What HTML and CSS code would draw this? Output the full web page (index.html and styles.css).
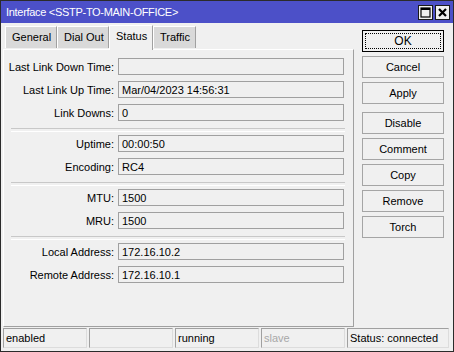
FILE: index.html
```html
<!DOCTYPE html>
<html lang="en">
<head>
    <meta charset="UTF-8">
    <title>Interface &lt;SSTP-TO-MAIN-OFFICE&gt;</title>
    <link rel="stylesheet" href="styles.css">
</head>
<body>

<div class="window">
    <div class="titlebar">
        <span class="title">Interface &lt;SSTP-TO-MAIN-OFFICE&gt;</span>
        <span class="tb-btn">
            <svg width="11" height="11" viewBox="0 0 11 11"><rect x="1" y="1" width="9" height="9" fill="none" stroke="#000" stroke-width="1.2"/><rect x="1" y="1" width="9" height="2" fill="#000"/></svg>
        </span>
        <span class="tb-btn">
            <svg width="11" height="11" viewBox="0 0 11 11"><path d="M2 2 L9 9 M9 2 L2 9" stroke="#000" stroke-width="2.2"/></svg>
        </span>
    </div>

    <div class="main">
        <div class="left">
            <div class="tabs">
                <div class="tab">General</div>
                <div class="tab">Dial Out</div>
                <div class="tab active">Status</div>
                <div class="tab">Traffic</div>
            </div>
            <div class="panel">
                <div class="row"><label>Last Link Down Time:</label><div class="field"></div></div>
                <div class="row"><label>Last Link Up Time:</label><div class="field">Mar/04/2023 14:56:31</div></div>
                <div class="row"><label>Link Downs:</label><div class="field">0</div></div>
                <div class="sep"></div>
                <div class="row"><label>Uptime:</label><div class="field">00:00:50</div></div>
                <div class="row"><label>Encoding:</label><div class="field">RC4</div></div>
                <div class="sep"></div>
                <div class="row"><label>MTU:</label><div class="field">1500</div></div>
                <div class="row"><label>MRU:</label><div class="field">1500</div></div>
                <div class="sep"></div>
                <div class="row"><label>Local Address:</label><div class="field">172.16.10.2</div></div>
                <div class="row"><label>Remote Address:</label><div class="field">172.16.10.1</div></div>
            </div>
        </div>

        <div class="buttons">
            <button class="btn default"><span>OK</span></button>
            <button class="btn">Cancel</button>
            <button class="btn">Apply</button>
            <button class="btn gap">Disable</button>
            <button class="btn">Comment</button>
            <button class="btn">Copy</button>
            <button class="btn">Remove</button>
            <button class="btn">Torch</button>
        </div>
    </div>

    <div class="statusbar">
        <div class="cell">enabled</div>
        <div class="cell"></div>
        <div class="cell">running</div>
        <div class="cell muted">slave</div>
        <div class="cell wide">Status: connected</div>
    </div>
</div>

</body>
</html>
```

FILE: styles.css
```css
* {
    box-sizing: border-box;
}

body {
    margin: 0;
    font-family: 'Liberation Sans', Arial, sans-serif;
    font-size: 11px;
    color: #000;
    background: #fff;
}

.window {
    width: 454px;
    height: 352px;
    border: 1px solid #2b2b2b;
    background-color: #f0f0f0;
    display: flex;
    flex-direction: column;
}

.titlebar {
    height: 22px;
    background-color: #4c50c8;
    color: #fff;
    display: flex;
    align-items: center;
    padding: 0 3px 0 5px;
    gap: 2px;
    font-size: 11px;
}

.title {
    flex: 1;
    letter-spacing: -0.3px;
}

.tb-btn {
    width: 15px;
    height: 15px;
    background-color: #f0f0f0;
    border: 1px solid #1a1a1a;
    display: flex;
    align-items: center;
    justify-content: center;
}

.main {
    display: flex;
    padding-top: 2px;
    flex: 1;
}

.left {
    margin-left: 2px;
    width: 351px;
    display: flex;
    flex-direction: column;
}

.tabs {
    display: flex;
    align-items: flex-end;
    height: 24px;
    padding-left: 2px;
    position: relative;
    z-index: 1;
}

.tab {
    height: 22px;
    background-color: #d9d9d9;
    border: 1px solid #fff;
    border-right-color: #a0a0a0;
    border-bottom: none;
    padding: 4px 0 0 6px;
    margin-bottom: 1px;
    white-space: nowrap;
}

.tab:nth-child(1) { width: 52px; }
.tab:nth-child(2) { width: 52px; }
.tab:nth-child(3) { width: 44px; }
.tab:nth-child(4) { width: 43px; }

.tab.active {
    height: 25px;
    background-color: #f0f0f0;
    margin-bottom: -1px;
    padding-top: 4px;
}

.panel {
    height: 278px;
    border: 1px solid #fff;
    border-right-color: #a0a0a0;
    border-bottom-color: #a0a0a0;
    padding: 8px 0 0 0;
}

.row {
    display: flex;
    align-items: center;
    height: 17px;
    margin-bottom: 6px;
}

.row label {
    width: 114px;
    text-align: right;
    padding-right: 4px;
    white-space: nowrap;
}

.field {
    width: 226px;
    height: 17px;
    border: 1px solid #a0a0a0;
    padding: 1px 0 0 3px;
    line-height: 14px;
    white-space: nowrap;
}

.sep {
    height: 8px;
    margin: 0 8px 0 7px;
    padding-top: 1px;
}

.sep::before {
    content: "";
    display: block;
    height: 2px;
    border-top: 1px solid #c8c8c8;
    border-bottom: 1px solid #fff;
}

.buttons {
    margin-left: 8px;
    padding-top: 5px;
    width: 82px;
    display: flex;
    flex-direction: column;
    gap: 4px;
}

.btn {
    height: 22px;
    width: 82px;
    font-family: inherit;
    font-size: 11px;
    color: #000;
    background-color: #f0f0f0;
    border: 1px solid #a5a5a5;
    padding: 0;
}

.btn.gap {
    margin-top: 4px;
}

.btn.default {
    border: 1px solid #000;
    padding: 2px;
}

.btn.default span {
    display: flex;
    height: 100%;
    align-items: center;
    justify-content: center;
    border: 1px dotted #000;
    font-size: 12px;
}

.statusbar {
    display: flex;
    gap: 2px;
    padding: 1px 0 3px 2px;
    height: 24px;
}

.cell {
    width: 84px;
    height: 20px;
    border: 1px solid #a0a0a0;
    border-right-color: #dcdcdc;
    border-bottom-color: #dcdcdc;
    padding: 3px 0 0 2px;
    white-space: nowrap;
}

.cell.muted {
    color: #a8a8a8;
}

.cell.wide {
    width: 102px;
}
```
